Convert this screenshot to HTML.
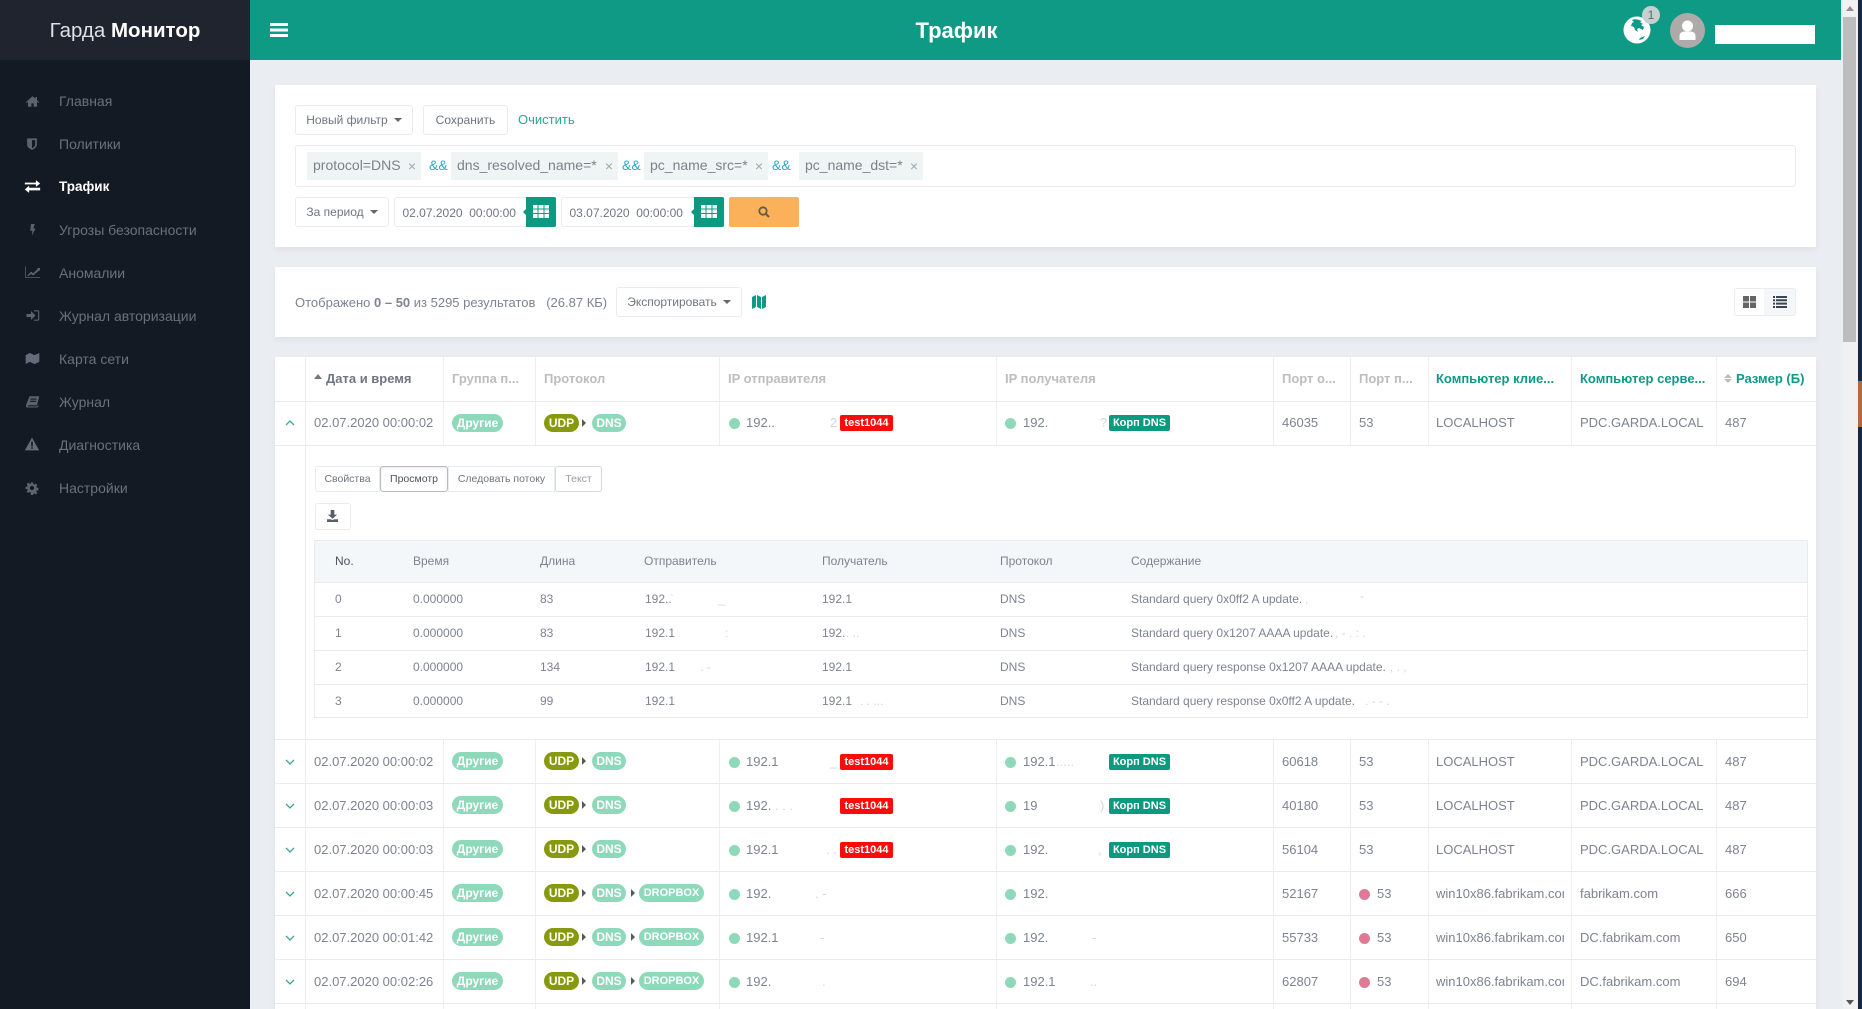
<!DOCTYPE html>
<html lang="ru"><head><meta charset="utf-8"><title>Трафик</title>
<style>
*{box-sizing:border-box}
html,body{margin:0;padding:0}
body{width:1862px;height:1009px;overflow:hidden;position:relative;background:#eaedf1;font-family:"Liberation Sans","DejaVu Sans",sans-serif;color:#7d8390;font-size:13px}
.a,.a>*{position:absolute}
div,span.p{white-space:nowrap}
.side{left:0;top:0;width:250px;height:1009px;background:#141a24}
.logo{left:0;top:0;width:250px;height:60px;background:#1f242e;color:#dfe1e4;font-size:20.500px;line-height:62px;text-align:center}
.logo b{color:#fff}
.n{position:absolute;left:59px;font-size:14px;line-height:20px;color:#6b717c}
.ic{position:absolute;fill:#5d626b}
.top{position:absolute;left:250px;top:0;width:1591px;height:60px;background:#0e9a85}
.title{position:absolute;left:250px;width:1413px;top:0;text-align:center;color:#fff;font:bold 22px/62px "Liberation Sans",sans-serif}
.card{position:absolute;left:275px;width:1541px;background:#fff;box-shadow:0 3px 5px rgba(120,130,145,.10)}
.btn{position:absolute;height:30px;border:1px solid #e8ebef;border-radius:3px;background:#fff;color:#6f757f;font-size:12px;line-height:28px;text-align:center}
.car{display:inline-block;border:4px solid transparent;border-top-color:#666;border-bottom:0;margin-left:6px;vertical-align:2px}
.tag{position:absolute;top:152px;height:28px;background:#eff4f4;color:#7c828a;font-size:14px;line-height:26px;padding-left:6px}
.tag i{position:absolute;right:5px;top:1px;font-style:normal;font-size:14px;color:#a1a6ab}
.amp{position:absolute;top:152px;color:#2ea7c7;font-size:14px;line-height:26px}
.date{position:absolute;top:197px;height:30px;border:1px solid #e8ebef;border-radius:3px;background:#fff;color:#70767f;font-size:12px;line-height:30px;padding-left:7.500px;white-space:pre}
.cal{position:absolute;top:197px;width:30px;height:30px;background:#0b9a80;border-radius:0 2px 2px 0}
.cal svg{position:absolute;left:7px;top:7px}
.cal:before{content:"";position:absolute;left:-3px;top:12px;border:3px solid transparent;border-right-color:#0b9a80;border-left:0}
.th{position:absolute;top:357px;height:44px;line-height:44px;font-size:13px;font-weight:bold;color:#bdbdbd}
.vl{position:absolute;width:1px;background:#eceef0}
.hl{position:absolute;left:275px;width:1541px;height:1px;background:#e9ebee}
.t{position:absolute;line-height:44px;font-size:13px;color:#7d8390;overflow:hidden}
.r{position:absolute;left:0;width:1862px;height:44px}
.r>*{position:absolute}
.pill{top:12px;height:18px;border-radius:9px;background:#8fd9bb;color:#fff;font-weight:bold;font-size:12px;line-height:18px;text-align:center}
.d{font-size:11px}
.u{background:#879a0c}
.ar{top:17px;width:0;height:0;border:4px solid transparent;border-left-color:#55595f;border-right:0}
.dot{top:16.500px;width:11px;height:11px;border-radius:50%;background:#8fd9bb}
.dot.red{background:#dd7a96}
.bd{top:14px;height:16px;border-radius:2px;color:#fff;font-weight:bold;font-size:11px;line-height:16px;text-align:center}
.bd.x{background:#ff0a0a}
.bd.k{background:#0b9a80}
.ch{left:285px;top:19px;width:10px;height:6px}
.tab{position:absolute;top:466px;height:26px;background:#fff;border:1px solid #e8ebef;color:#6f757f;font-size:10.500px;line-height:25px;text-align:center}
.it{position:absolute;font-size:12px;line-height:20px;color:#7d8390}
.ih{position:absolute;left:315px;width:1492px;height:1px;background:#e9ebee}
.s{color:#d3d6db!important}
</style></head><body>

<div class="a side">
<div class="logo">Гарда <b>Монитор</b></div>
</div>
<svg class="ic" style="left:25px;top:94px" width="15" height="15" viewBox="0 0 20 20"><path d="M10 3 1 11l1 1 2-1.600V17h4.500v-4.500h3V17H16v-6.600l2 1.600 1-1-3-2.600V4h-2v2.200z"/></svg>
<div class="n" style="top:91px">Главная</div>
<svg class="ic" style="left:25px;top:137px" width="14" height="14" viewBox="0 0 20 20"><path d="M3 2h14v9c0 3.500-3.500 5.500-7 7.500-3.500-2-7-4-7-7.500zM10 4.500v11.500c2-1.300 4.500-2.700 4.500-5V4.500z" fill-rule="evenodd"/></svg>
<div class="n" style="top:134px">Политики</div>
<svg class="ic" style="left:24px;top:178px;fill:#fff" width="17" height="17" viewBox="0 0 20 20"><path d="M1 6h13V3l5 4-5 4V8H1zM19 12H6V9.500L1 14l5 4v-3h13z" transform="translate(0 -.5)"/></svg>
<div class="n" style="top:177px;color:#fff;font-weight:bold;font-size:13.500px">Трафик</div>
<svg class="ic" style="left:25px;top:222px" width="15" height="16" viewBox="0 0 20 20"><path d="M8 2h5l-2 6h3l-5 10 1-7H7z"/></svg>
<div class="n" style="top:220px">Угрозы безопасности</div>
<svg class="ic" style="left:24px;top:265px" width="17" height="15" viewBox="0 0 22 20"><path d="M1 2h1v14h19v1H1zM4 14l5-5 3 2 6-6-1-1h4v4l-1-1-8 7-3-2-4 3z"/></svg>
<div class="n" style="top:263px">Аномалии</div>
<svg class="ic" style="left:25px;top:308px" width="15" height="15" viewBox="0 0 20 20"><path d="M2 8h6V4l6 6-6 6v-4H2zM12 3h5a2 2 0 0 1 2 2v10a2 2 0 0 1-2 2h-5v-1.500h5l.5-.5V5l-.5-.5h-5z"/></svg>
<div class="n" style="top:306px">Журнал авторизации</div>
<svg class="ic" style="left:25px;top:351px;fill:#666d7a" width="15" height="15" viewBox="0 0 22 20"><path d="M1 5l6-3 7 3 7-3v13l-7 3-7-3-6 3z"/></svg>
<div class="n" style="top:349px">Карта сети</div>
<svg class="ic" style="left:25px;top:394px" width="15" height="15" viewBox="0 0 20 20"><path d="M6 3h13l-3 12H4a1.500 1.500 0 0 0 0 1.500h12l2-2v2l-1.500 1.500H3c-1.500 0-2-1-1.700-3zM7.500 6l-.3 1.500h8l.3-1.500zM7 9l-.3 1.500h8L15 9z"/></svg>
<div class="n" style="top:392px">Журнал</div>
<svg class="ic" style="left:24px;top:436px;fill:#666b74" width="16" height="16" viewBox="0 0 20 20"><path d="M10 2l9 16H1zM9 7v6h2V7zM9 14v2h2v-2z" fill-rule="evenodd"/></svg>
<div class="n" style="top:435px">Диагностика</div>
<svg class="ic" style="left:25px;top:481px" width="14" height="14" viewBox="0 0 20 20"><path fill-rule="evenodd" d="M8.500 2h3l.5 2.400 1.500.7 2.100-1.300 2 2.100-1.300 2 .6 1.600 2.400.5v3l-2.400.5-.6 1.500 1.300 2.100-2 2-2.100-1.300-1.500.6-.5 2.400h-3L8 16.300l-1.500-.6-2.100 1.300-2-2 1.300-2.100-.6-1.500L.7 11.500v-3l2.400-.5.6-1.600-1.300-2 2-2.100 2.100 1.300L8 4.400zM10 7a3 3 0 1 0 0 6 3 3 0 0 0 0-6z"/></svg>
<div class="n" style="top:478px">Настройки</div>

<div class="top"></div>
<svg style="position:absolute;left:270px;top:22px" width="18" height="16"><path fill="#fff" d="M0 1h18v3H0zM0 6.500h18v3H0zM0 12h18v3H0z"/></svg>
<div class="title">Трафик</div>
<svg style="position:absolute;left:1623px;top:16px" width="28" height="28" viewBox="0 0 28 28"><circle cx="14" cy="14" r="13.500" fill="#fff"/><path fill="#0e9a85" d="M9 4c2-1 5-1 7 0l3 1-2 1 3 2-2 1 3 2-1 3-4-2-2 1 1 3-3-2-1-3-3-1 1-3 2-1zM17 22l5-2-2 3-4 1z"/></svg>
<div style="position:absolute;left:1642px;top:6px;width:18px;height:18px;border-radius:50%;background:#c5d0d0;color:#666;font-size:12px;line-height:18px;text-align:center">1</div>
<svg style="position:absolute;left:1670px;top:13px" width="35" height="35" viewBox="0 0 35 35"><circle cx="17.500" cy="17.500" r="17.500" fill="#aeaaaa"/><circle cx="17.500" cy="13" r="5.500" fill="#fff"/><path fill="#fff" d="M9.500 27v-4c0-3.500 3-4.500 5-4.500h6c2 0 5 1 5 4.500v4z"/></svg>
<div style="position:absolute;left:1715px;top:25px;width:100px;height:19px;background:#fff"></div>

<div style="position:absolute;left:1843px;top:0;width:15px;height:1009px;background:#f1f1f1"></div>
<div style="position:absolute;left:1843px;top:17px;width:13px;height:325px;background:#bdbdbd"></div>
<div style="position:absolute;left:1846px;top:6px;border:4px solid transparent;border-bottom:5px solid #9a8a94;border-top:0"></div>
<div style="position:absolute;left:1846px;top:1000px;border:4px solid transparent;border-top:5px solid #555;border-bottom:0"></div>
<div style="position:absolute;left:1858px;top:0;width:4px;height:1009px;background:#14284a"></div>
<div style="position:absolute;left:1858px;top:381px;width:4px;height:46px;background:#b06a3c"></div>

<div class="card" style="top:85px;height:162px"></div>
<div class="btn" style="left:295px;top:105px;width:118px">Новый фильтр<span class="car"></span></div>
<div class="btn" style="left:423px;top:105px;width:85px">Сохранить</div>
<div style="position:absolute;left:518px;top:105px;line-height:30px;font-size:13px;color:#2aa596">Очистить</div>
<div style="position:absolute;left:295px;top:145px;width:1501px;height:42px;border:1px solid #e8ebef;border-radius:3px"></div>
<div class="tag" style="left:307px;width:114px">protocol=DNS<i>×</i></div>
<div class="amp" style="left:429px">&amp;&amp;</div>
<div class="tag" style="left:451px;width:167px">dns_resolved_name=*<i>×</i></div>
<div class="amp" style="left:622px">&amp;&amp;</div>
<div class="tag" style="left:644px;width:124px">pc_name_src=*<i>×</i></div>
<div class="amp" style="left:772px">&amp;&amp;</div>
<div class="tag" style="left:799px;width:124px">pc_name_dst=*<i>×</i></div>
<div class="btn" style="left:295px;top:197px;width:94px">За период<span class="car"></span></div>
<div class="date" style="left:394px;width:135px">02.07.2020  00:00:00</div>
<div class="cal" style="left:526px"><svg width="16" height="16"><path fill="#fff" d="M0 1h4.500v3.500H0zM5.500 1h5v3.500h-5zM11.500 1H16v3.500h-4.500zM0 5.500h4.500V9H0zM5.500 5.500h5V9h-5zM11.500 5.500H16V9h-4.500zM0 10h4.500v4H0zM5.500 10h5v4h-5zM11.500 10H16v4h-4.500z"/></svg></div>
<div class="date" style="left:561px;width:135px">03.07.2020  00:00:00</div>
<div class="cal" style="left:694px"><svg width="16" height="16"><path fill="#fff" d="M0 1h4.500v3.500H0zM5.500 1h5v3.500h-5zM11.500 1H16v3.500h-4.500zM0 5.500h4.500V9H0zM5.500 5.500h5V9h-5zM11.500 5.500H16V9h-4.500zM0 10h4.500v4H0zM5.500 10h5v4h-5zM11.500 10H16v4h-4.500z"/></svg></div>
<div style="position:absolute;left:729px;top:197px;width:70px;height:30px;background:#fbb05a;border-radius:2px"><svg style="position:absolute;left:29px;top:9px" width="12" height="12" viewBox="0 0 12 12"><circle cx="5" cy="5" r="3.700" fill="none" stroke="#6b5a40" stroke-width="1.800"/><path d="M8 8l3 3" stroke="#6b5a40" stroke-width="2"/></svg></div>

<div class="card" style="top:267px;height:70px"></div>
<div style="position:absolute;left:295px;top:293px;font-size:13px;line-height:20px;color:#7d8390;white-space:pre">Отображено <b>0 – 50</b> из 5295 результатов   (26.87 КБ)</div>
<div class="btn" style="left:616px;top:287px;width:126px">Экспортировать<span class="car"></span></div>
<svg style="position:absolute;left:752px;top:295px" width="14" height="14" viewBox="0 0 14 14"><path fill="#0e9a85" d="M0 2l4-2v12l-4 2zM5 0l4 2v12l-4-2zM10 2l4-2v12l-4 2z"/></svg>
<div style="position:absolute;left:1734px;top:288px;width:62px;height:28px;border:1px solid #e8ebef;border-radius:3px;background:#fff"></div>
<div style="position:absolute;left:1764px;top:289px;width:31px;height:26px;background:#f5f6f8"></div>
<svg style="position:absolute;left:1743px;top:296px" width="13" height="12"><path fill="#666" d="M0 0h6v5.500H0zM7 0h6v5.500H7zM0 6.500h6V12H0zM7 6.500h6V12H7z"/></svg>
<svg style="position:absolute;left:1773px;top:296px" width="14" height="12"><path fill="#3b4454" d="M0 0h2v2H0zM3 0h11v2H3zM0 3.300h2v2H0zM3 3.300h11v2H3zM0 6.600h2v2H0zM3 6.600h11v2H3zM0 10h2v2H0zM3 10h11v2H3z"/></svg>

<div class="card" style="top:357px;height:652px"></div>
<div class="vl" style="left:305px;top:357px;height:652px"></div>
<div class="vl" style="left:443px;top:357px;height:88px"></div>
<div class="vl" style="left:535px;top:357px;height:88px"></div>
<div class="vl" style="left:719px;top:357px;height:88px"></div>
<div class="vl" style="left:996px;top:357px;height:88px"></div>
<div class="vl" style="left:1273px;top:357px;height:88px"></div>
<div class="vl" style="left:1350px;top:357px;height:88px"></div>
<div class="vl" style="left:1428px;top:357px;height:88px"></div>
<div class="vl" style="left:1571px;top:357px;height:88px"></div>
<div class="vl" style="left:1716px;top:357px;height:88px"></div>
<div class="vl" style="left:443px;top:740px;height:269px"></div>
<div class="vl" style="left:535px;top:740px;height:269px"></div>
<div class="vl" style="left:719px;top:740px;height:269px"></div>
<div class="vl" style="left:996px;top:740px;height:269px"></div>
<div class="vl" style="left:1273px;top:740px;height:269px"></div>
<div class="vl" style="left:1350px;top:740px;height:269px"></div>
<div class="vl" style="left:1428px;top:740px;height:269px"></div>
<div class="vl" style="left:1571px;top:740px;height:269px"></div>
<div class="vl" style="left:1716px;top:740px;height:269px"></div>
<div class="hl" style="top:401px"></div>
<div class="hl" style="top:445px"></div>
<div class="hl" style="top:739px"></div>
<div class="hl" style="top:783px"></div>
<div class="hl" style="top:827px"></div>
<div class="hl" style="top:871px"></div>
<div class="hl" style="top:915px"></div>
<div class="hl" style="top:959px"></div>
<div class="hl" style="top:1003px"></div>

<div style="position:absolute;left:314px;top:374px;border:4px solid transparent;border-bottom:5px solid #777;border-top:0"></div>
<div class="th" style="left:326px;color:#6f7683">Дата и время</div>
<div class="th" style="left:452px">Группа п...</div>
<div class="th" style="left:544px">Протокол</div>
<div class="th" style="left:728px">IP отправителя</div>
<div class="th" style="left:1005px">IP получателя</div>
<div class="th" style="left:1282px">Порт о...</div>
<div class="th" style="left:1359px">Порт п...</div>
<div class="th" style="left:1436px;color:#0e9a85">Компьютер клие...</div>
<div class="th" style="left:1580px;color:#0e9a85">Компьютер серве...</div>
<div style="position:absolute;left:1724px;top:374px;border:4px solid transparent;border-bottom:4px solid #bbb;border-top:0"></div>
<div style="position:absolute;left:1724px;top:379px;border:4px solid transparent;border-top:4px solid #bbb;border-bottom:0"></div>
<div class="th" style="left:1736px;color:#0e9a85">Размер (Б)</div>

<div class="r" style="top:401px">
<svg class="ch" viewBox="0 0 10 6"><path d="M1 5l4-4 4 4" fill="none" stroke="#3aa898" stroke-width="1.300"/></svg>
<div class="t" style="left:314px">02.07.2020 00:00:02</div>
<div class="pill" style="left:452px;width:51px;top:13px">Другие</div>
<div class="pill u" style="left:544px;width:35px;top:13px">UDP</div><div class="ar" style="left:582px;top:18px"></div><div class="pill" style="left:592px;width:34px;top:13px">DNS</div>
<div class="dot" style="left:729px"></div><div class="t" style="left:746px">192..</div><div class="t s" style="left:830px">2</div><div class="bd x" style="left:840px;width:53px">test1044</div>
<div class="dot" style="left:1005px"></div><div class="t" style="left:1023px">192.</div><div class="t s" style="left:1100px">?</div><div class="bd k" style="left:1109px;width:61px">Корп DNS</div>
<div class="t" style="left:1282px">46035</div><div class="t" style="left:1359px">53</div>
<div class="t" style="left:1436px">LOCALHOST</div><div class="t" style="left:1580px">PDC.GARDA.LOCAL</div><div class="t" style="left:1725px">487</div>
</div>

<div class="tab" style="left:315px;width:65px;border-radius:3px 0 0 3px">Свойства</div>
<div class="tab" style="left:380px;width:68px;border:1px solid #b9bdc3;color:#4d535c;border-radius:3px;box-shadow:inset 0 1px 2px rgba(0,0,0,.1)">Просмотр</div>
<div class="tab" style="left:448px;width:107px">Следовать потоку</div>
<div class="tab" style="left:555px;width:47px;border-color:#d5d8dc;color:#9a9ea5;border-radius:3px">Текст</div>
<div style="position:absolute;left:315px;top:503px;width:36px;height:27px;border:1px solid #e8ebef;border-radius:3px;background:#fff"></div>
<svg style="position:absolute;left:327px;top:510px" width="11" height="12" viewBox="0 0 12 13"><path fill="#5a5f66" d="M4 0h4v5h3L6 9.500 1 5h3zM0 10h4l2 1 2-1h4v3H0z"/></svg>

<div style="position:absolute;left:314px;top:540px;width:1494px;height:178px;border:1px solid #e9ebee;background:#fff"></div>
<div style="position:absolute;left:315px;top:541px;width:1492px;height:41px;background:#f4f7f9"></div>
<div class="ih" style="top:582px"></div><div class="ih" style="top:616px"></div><div class="ih" style="top:650px"></div><div class="ih" style="top:684px"></div>
<div class="it" style="left:335px;top:551px;color:#4f5560">No.</div>
<div class="it" style="left:413px;top:551px">Время</div>
<div class="it" style="left:540px;top:551px">Длина</div>
<div class="it" style="left:644px;top:551px">Отправитель</div>
<div class="it" style="left:822px;top:551px">Получатель</div>
<div class="it" style="left:1000px;top:551px">Протокол</div>
<div class="it" style="left:1131px;top:551px">Содержание</div>

<div class="it" style="left:335px;top:589px">0</div><div class="it" style="left:413px;top:589px">0.000000</div><div class="it" style="left:540px;top:589px">83</div><div class="it" style="left:645px;top:589px">192..</div><div class="it s" style="left:670px;top:589px">`</div><div class="it s" style="left:718px;top:589px">_</div><div class="it" style="left:822px;top:589px">192.1</div><div class="it" style="left:1000px;top:589px">DNS</div><div class="it" style="left:1131px;top:589px">Standard query 0x0ff2 A update.</div><div class="it s" style="left:1305px;top:589px">,</div><div class="it s" style="left:1360px;top:586px">-</div>
<div class="it" style="left:335px;top:623px">1</div><div class="it" style="left:413px;top:623px">0.000000</div><div class="it" style="left:540px;top:623px">83</div><div class="it" style="left:645px;top:623px">192.1</div><div class="it s" style="left:725px;top:623px">:</div><div class="it" style="left:822px;top:623px">192.</div><div class="it s" style="left:846px;top:623px">. ..</div><div class="it" style="left:1000px;top:623px">DNS</div><div class="it" style="left:1131px;top:623px">Standard query 0x1207 AAAA update.</div><div class="it s" style="left:1335px;top:623px">, -  . : .</div>
<div class="it" style="left:335px;top:657px">2</div><div class="it" style="left:413px;top:657px">0.000000</div><div class="it" style="left:540px;top:657px">134</div><div class="it" style="left:645px;top:657px">192.1</div><div class="it s" style="left:700px;top:657px">. -</div><div class="it" style="left:822px;top:657px">192.1</div><div class="it" style="left:1000px;top:657px">DNS</div><div class="it" style="left:1131px;top:657px">Standard query response 0x1207 AAAA update.</div><div class="it s" style="left:1390px;top:657px">,    .              ,</div>
<div class="it" style="left:335px;top:691px">3</div><div class="it" style="left:413px;top:691px">0.000000</div><div class="it" style="left:540px;top:691px">99</div><div class="it" style="left:645px;top:691px">192.1</div><div class="it" style="left:822px;top:691px">192.1</div><div class="it s" style="left:860px;top:691px">. .  ...</div><div class="it" style="left:1000px;top:691px">DNS</div><div class="it" style="left:1131px;top:691px">Standard query response 0x0ff2 A update.</div><div class="it s" style="left:1365px;top:691px">.  -         -  .</div>

<div class="r" style="top:740px"><svg class="ch" viewBox="0 0 10 6"><path d="M1 1l4 4 4-4" fill="none" stroke="#3aa898" stroke-width="1.300"/></svg><div class="t" style="left:314px">02.07.2020 00:00:02</div><div class="pill" style="left:452px;width:51px">Другие</div><div class="pill u" style="left:544px;width:35px">UDP</div><div class="ar" style="left:582px"></div><div class="pill" style="left:592px;width:34px">DNS</div><div class="dot" style="left:729px"></div><div class="t" style="left:746px">192.1</div><div class="t s" style="left:830px">_</div><div class="bd x" style="left:840px;width:53px">test1044</div><div class="dot" style="left:1005px"></div><div class="t" style="left:1023px">192.1</div><div class="t s" style="left:1056px">.....</div><div class="bd k" style="left:1109px;width:61px">Корп DNS</div><div class="t" style="left:1282px">60618</div><div class="t" style="left:1359px">53</div><div class="t" style="left:1436px">LOCALHOST</div><div class="t" style="left:1580px">PDC.GARDA.LOCAL</div><div class="t" style="left:1725px">487</div></div>

<div class="r" style="top:784px"><svg class="ch" viewBox="0 0 10 6"><path d="M1 1l4 4 4-4" fill="none" stroke="#3aa898" stroke-width="1.300"/></svg><div class="t" style="left:314px">02.07.2020 00:00:03</div><div class="pill" style="left:452px;width:51px">Другие</div><div class="pill u" style="left:544px;width:35px">UDP</div><div class="ar" style="left:582px"></div><div class="pill" style="left:592px;width:34px">DNS</div><div class="dot" style="left:729px"></div><div class="t" style="left:746px">192.</div><div class="t s" style="left:775px">. . .</div><div class="bd x" style="left:840px;width:53px">test1044</div><div class="dot" style="left:1005px"></div><div class="t" style="left:1023px">19</div><div class="t s" style="left:1100px">)</div><div class="bd k" style="left:1109px;width:61px">Корп DNS</div><div class="t" style="left:1282px">40180</div><div class="t" style="left:1359px">53</div><div class="t" style="left:1436px">LOCALHOST</div><div class="t" style="left:1580px">PDC.GARDA.LOCAL</div><div class="t" style="left:1725px">487</div></div>

<div class="r" style="top:828px"><svg class="ch" viewBox="0 0 10 6"><path d="M1 1l4 4 4-4" fill="none" stroke="#3aa898" stroke-width="1.300"/></svg><div class="t" style="left:314px">02.07.2020 00:00:03</div><div class="pill" style="left:452px;width:51px">Другие</div><div class="pill u" style="left:544px;width:35px">UDP</div><div class="ar" style="left:582px"></div><div class="pill" style="left:592px;width:34px">DNS</div><div class="dot" style="left:729px"></div><div class="t" style="left:746px">192.1</div><div class="t s" style="left:826px">. .</div><div class="bd x" style="left:840px;width:53px">test1044</div><div class="dot" style="left:1005px"></div><div class="t" style="left:1023px">192.</div><div class="t s" style="left:1098px">,</div><div class="bd k" style="left:1109px;width:61px">Корп DNS</div><div class="t" style="left:1282px">56104</div><div class="t" style="left:1359px">53</div><div class="t" style="left:1436px">LOCALHOST</div><div class="t" style="left:1580px">PDC.GARDA.LOCAL</div><div class="t" style="left:1725px">487</div></div>

<div class="r" style="top:872px"><svg class="ch" viewBox="0 0 10 6"><path d="M1 1l4 4 4-4" fill="none" stroke="#3aa898" stroke-width="1.300"/></svg><div class="t" style="left:314px">02.07.2020 00:00:45</div><div class="pill" style="left:452px;width:51px">Другие</div><div class="pill u" style="left:544px;width:35px">UDP</div><div class="ar" style="left:582px"></div><div class="pill" style="left:592px;width:34px">DNS</div><div class="ar" style="left:631px"></div><div class="pill d" style="left:639px;width:65px">DROPBOX</div><div class="dot" style="left:729px"></div><div class="t" style="left:746px">192.</div><div class="t s" style="left:815px">. -</div><div class="dot" style="left:1005px"></div><div class="t" style="left:1023px">192.</div><div class="t" style="left:1282px">52167</div><div class="dot red" style="left:1359px"></div><div class="t" style="left:1377px">53</div><div class="t" style="left:1436px;width:128px">win10x86.fabrikam.com</div><div class="t" style="left:1580px">fabrikam.com</div><div class="t" style="left:1725px">666</div></div>

<div class="r" style="top:916px"><svg class="ch" viewBox="0 0 10 6"><path d="M1 1l4 4 4-4" fill="none" stroke="#3aa898" stroke-width="1.300"/></svg><div class="t" style="left:314px">02.07.2020 00:01:42</div><div class="pill" style="left:452px;width:51px">Другие</div><div class="pill u" style="left:544px;width:35px">UDP</div><div class="ar" style="left:582px"></div><div class="pill" style="left:592px;width:34px">DNS</div><div class="ar" style="left:631px"></div><div class="pill d" style="left:639px;width:65px">DROPBOX</div><div class="dot" style="left:729px"></div><div class="t" style="left:746px">192.1</div><div class="t s" style="left:820px">-</div><div class="dot" style="left:1005px"></div><div class="t" style="left:1023px">192.</div><div class="t s" style="left:1092px">-</div><div class="t" style="left:1282px">55733</div><div class="dot red" style="left:1359px"></div><div class="t" style="left:1377px">53</div><div class="t" style="left:1436px;width:128px">win10x86.fabrikam.com</div><div class="t" style="left:1580px">DC.fabrikam.com</div><div class="t" style="left:1725px">650</div></div>

<div class="r" style="top:960px"><svg class="ch" viewBox="0 0 10 6"><path d="M1 1l4 4 4-4" fill="none" stroke="#3aa898" stroke-width="1.300"/></svg><div class="t" style="left:314px">02.07.2020 00:02:26</div><div class="pill" style="left:452px;width:51px">Другие</div><div class="pill u" style="left:544px;width:35px">UDP</div><div class="ar" style="left:582px"></div><div class="pill" style="left:592px;width:34px">DNS</div><div class="ar" style="left:631px"></div><div class="pill d" style="left:639px;width:65px">DROPBOX</div><div class="dot" style="left:729px"></div><div class="t" style="left:746px">192.</div><div class="t s" style="left:822px">.</div><div class="dot" style="left:1005px"></div><div class="t" style="left:1023px">192.1</div><div class="t s" style="left:1090px">..</div><div class="t" style="left:1282px">62807</div><div class="dot red" style="left:1359px"></div><div class="t" style="left:1377px">53</div><div class="t" style="left:1436px;width:128px">win10x86.fabrikam.com</div><div class="t" style="left:1580px">DC.fabrikam.com</div><div class="t" style="left:1725px">694</div></div>

</body></html>
